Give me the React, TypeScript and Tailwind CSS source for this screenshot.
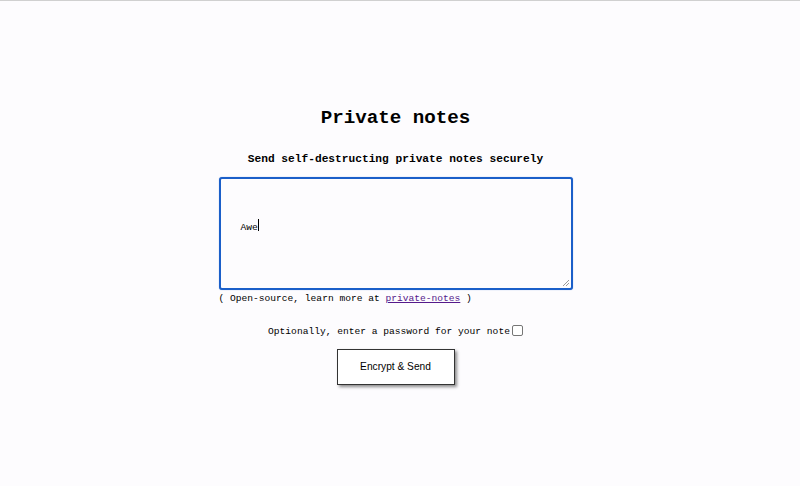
import React from "react";

export default function App() {
  const mono = { fontFamily: '"Liberation Mono", "Courier New", monospace' };
  return (
    <div className="min-h-[486px] w-full bg-[#fdfcfe] border-t border-[#d0d0d0]" style={mono}>
      <div className="flex flex-col items-center pt-[105px] pr-[9px]">
        <h1 className="text-[19.2px] leading-[24px] font-bold text-black">Private notes</h1>
        <p className="mt-[22px] text-[11.2px] leading-[14px] font-bold text-black">
          Send self-destructing private notes securely
        </p>
        <div className="mt-[11px] flex flex-col items-start">
          <div className="relative w-[354px] h-[113px] border-2 border-[#1b5fc9] rounded-[3px] bg-[#fdfcfe] px-[20px] pt-[35px] shadow-[0_0_1px_rgba(27,95,201,0.6)]">
            <span className="text-[9.6px] leading-[12px] text-black">Awe</span>
            <span className="inline-block w-px h-[12px] bg-black align-middle -mt-[2px]" />
            <svg className="absolute right-[1px] bottom-[1px]" width="8" height="8" viewBox="0 0 8 8">
              <line x1="7" y1="1" x2="1" y2="7" stroke="#9a9a9a" strokeWidth="1" />
              <line x1="7" y1="4" x2="4" y2="7" stroke="#9a9a9a" strokeWidth="1" />
            </svg>
          </div>
          <p className="mt-[3px] text-[9.6px] leading-[12px] text-black">
            ( Open-source, learn more at{" "}
            <a href="#" className="text-[#551a8b] underline">private-notes</a> )
          </p>
        </div>
        <div className="mt-[21px] flex items-center text-[9.6px] leading-[12px] text-black">
          <span>Optionally, enter a password for your note</span>
          <span className="ml-[2px] -mt-[4px] inline-block w-[11px] h-[11px] border border-[#767676] rounded-[2px] bg-white" />
        </div>
        <button
          className="mt-[11px] w-[118px] h-[36px] border border-[#333] bg-white text-[10.2px] text-black shadow-[2px_2px_3px_rgba(0,0,0,0.45)]"
          style={{ fontFamily: '"Liberation Sans", Arial, sans-serif' }}
        >
          Encrypt &amp; Send
        </button>
      </div>
    </div>
  );
}
